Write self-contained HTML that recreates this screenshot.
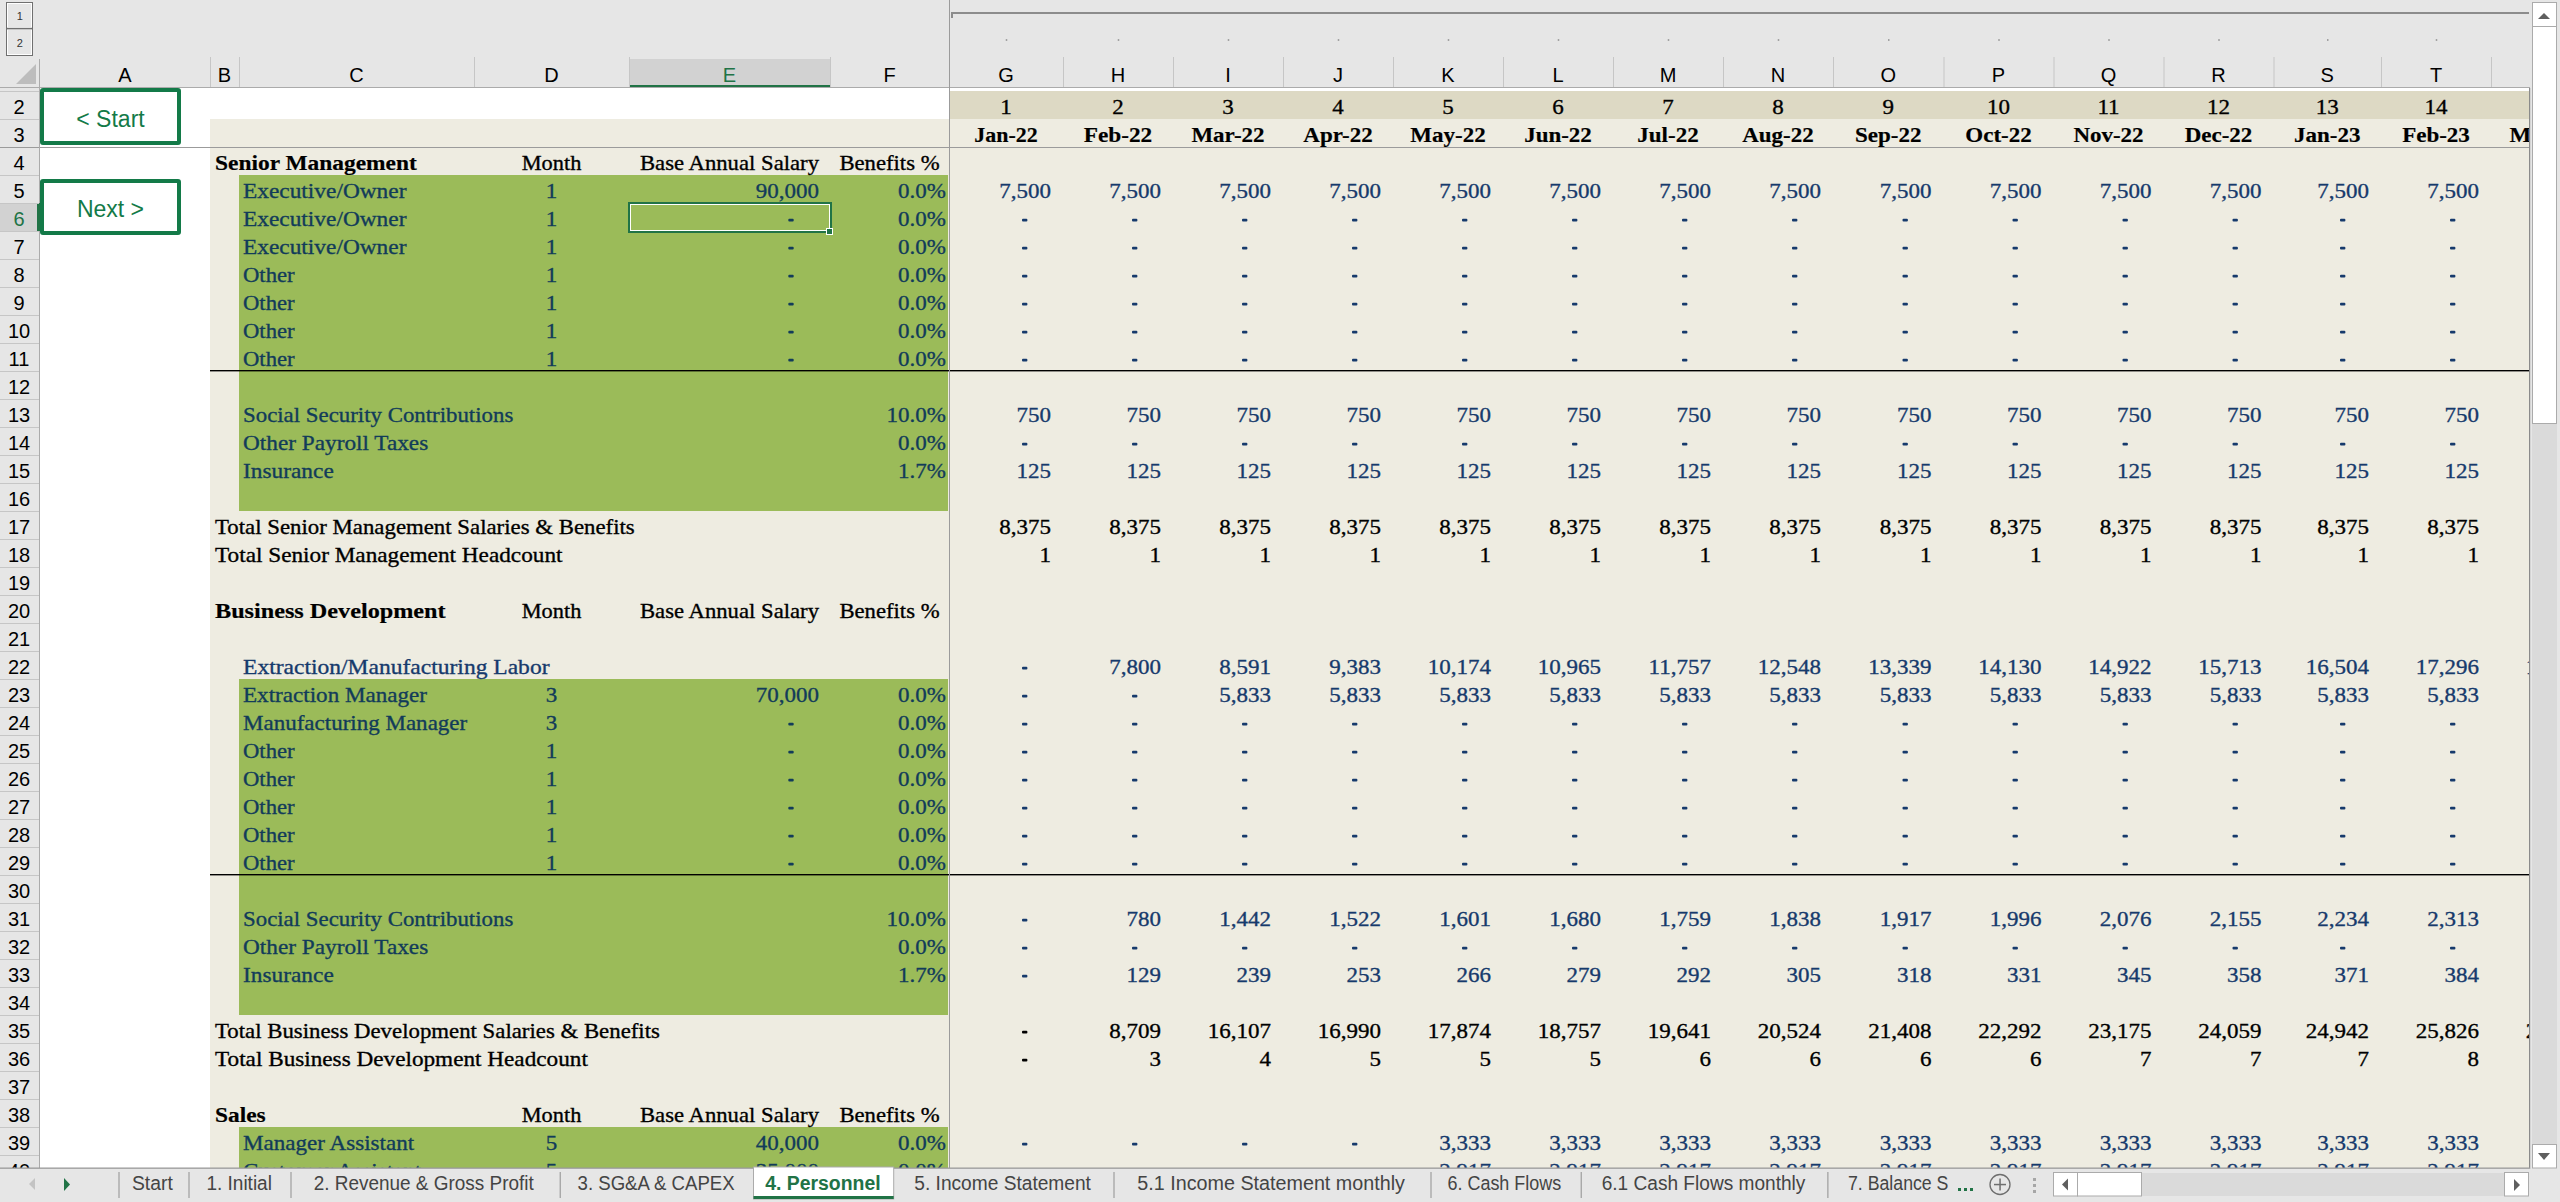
<!DOCTYPE html><html><head><meta charset="utf-8"><title>4. Personnel</title><style>
html,body{margin:0;padding:0;width:2560px;height:1202px;overflow:hidden;background:#E6E6E6}
svg{display:block}
.s{font-family:"Liberation Serif",serif;font-size:22px;stroke-width:0.35px}
.sb{font-family:"Liberation Serif",serif;font-size:22px;font-weight:bold;stroke-width:0.2px}
.hd{font-family:"Liberation Sans",sans-serif;font-size:20px}
.ol{font-family:"Liberation Sans",sans-serif;font-size:11px;fill:#333}
.btn{font-family:"Liberation Sans",sans-serif;font-size:23px}
.tab{font-family:"Liberation Sans",sans-serif;font-size:20px}
.tabb{font-family:"Liberation Sans",sans-serif;font-size:20px;font-weight:bold}
</style></head><body><svg width="2560" height="1202" viewBox="0 0 2560 1202"><defs><clipPath id="grid"><rect x="40" y="88" width="2489" height="1080"/></clipPath></defs><g clip-path="url(#grid)"><rect x="0" y="0" width="2560" height="1202" fill="#E6E6E6" /><rect x="40" y="88" width="2490" height="1080" fill="#FFFFFF" /><rect x="210" y="119" width="739" height="1049" fill="#EEECE1" /><rect x="949" y="91" width="1581" height="28" fill="#DDD9C4" /><rect x="949" y="119" width="1581" height="1049" fill="#EEECE1" /><rect x="239" y="175" width="709" height="336" fill="#9BBB59" /><rect x="239" y="679" width="709" height="336" fill="#9BBB59" /><rect x="239" y="1127" width="709" height="41" fill="#9BBB59" /><rect x="210" y="370" width="2320" height="1.4" fill="#000" /><rect x="210" y="874" width="2320" height="1.4" fill="#000" /><text x="1006.0" y="114" text-anchor="middle" class="s" fill="#000" stroke="#000" textLength="11.49" lengthAdjust="spacingAndGlyphs" >1</text><text x="1006.0" y="142" text-anchor="middle" class="sb" fill="#000" stroke="#000" textLength="63.31" lengthAdjust="spacingAndGlyphs" >Jan-22</text><text x="1118.0" y="114" text-anchor="middle" class="s" fill="#000" stroke="#000" textLength="11.49" lengthAdjust="spacingAndGlyphs" >2</text><text x="1118.0" y="142" text-anchor="middle" class="sb" fill="#000" stroke="#000" textLength="68.52" lengthAdjust="spacingAndGlyphs" >Feb-22</text><text x="1228.0" y="114" text-anchor="middle" class="s" fill="#000" stroke="#000" textLength="11.49" lengthAdjust="spacingAndGlyphs" >3</text><text x="1228.0" y="142" text-anchor="middle" class="sb" fill="#000" stroke="#000" textLength="73.20" lengthAdjust="spacingAndGlyphs" >Mar-22</text><text x="1338.0" y="114" text-anchor="middle" class="s" fill="#000" stroke="#000" textLength="11.49" lengthAdjust="spacingAndGlyphs" >4</text><text x="1338.0" y="142" text-anchor="middle" class="sb" fill="#000" stroke="#000" textLength="69.39" lengthAdjust="spacingAndGlyphs" >Apr-22</text><text x="1448.0" y="114" text-anchor="middle" class="s" fill="#000" stroke="#000" textLength="11.49" lengthAdjust="spacingAndGlyphs" >5</text><text x="1448.0" y="142" text-anchor="middle" class="sb" fill="#000" stroke="#000" textLength="75.34" lengthAdjust="spacingAndGlyphs" >May-22</text><text x="1558.0" y="114" text-anchor="middle" class="s" fill="#000" stroke="#000" textLength="11.49" lengthAdjust="spacingAndGlyphs" >6</text><text x="1558.0" y="142" text-anchor="middle" class="sb" fill="#000" stroke="#000" textLength="67.71" lengthAdjust="spacingAndGlyphs" >Jun-22</text><text x="1668.0" y="114" text-anchor="middle" class="s" fill="#000" stroke="#000" textLength="11.49" lengthAdjust="spacingAndGlyphs" >7</text><text x="1668.0" y="142" text-anchor="middle" class="sb" fill="#000" stroke="#000" textLength="61.31" lengthAdjust="spacingAndGlyphs" >Jul-22</text><text x="1778.0" y="114" text-anchor="middle" class="s" fill="#000" stroke="#000" textLength="11.49" lengthAdjust="spacingAndGlyphs" >8</text><text x="1778.0" y="142" text-anchor="middle" class="sb" fill="#000" stroke="#000" textLength="71.53" lengthAdjust="spacingAndGlyphs" >Aug-22</text><text x="1888.25" y="114" text-anchor="middle" class="s" fill="#000" stroke="#000" textLength="11.49" lengthAdjust="spacingAndGlyphs" >9</text><text x="1888.25" y="142" text-anchor="middle" class="sb" fill="#000" stroke="#000" textLength="66.42" lengthAdjust="spacingAndGlyphs" >Sep-22</text><text x="1998.5" y="114" text-anchor="middle" class="s" fill="#000" stroke="#000" textLength="22.99" lengthAdjust="spacingAndGlyphs" >10</text><text x="1998.5" y="142" text-anchor="middle" class="sb" fill="#000" stroke="#000" textLength="66.39" lengthAdjust="spacingAndGlyphs" >Oct-22</text><text x="2108.5" y="114" text-anchor="middle" class="s" fill="#000" stroke="#000" textLength="22.14" lengthAdjust="spacingAndGlyphs" >11</text><text x="2108.5" y="142" text-anchor="middle" class="sb" fill="#000" stroke="#000" textLength="70.24" lengthAdjust="spacingAndGlyphs" >Nov-22</text><text x="2218.5" y="114" text-anchor="middle" class="s" fill="#000" stroke="#000" textLength="22.99" lengthAdjust="spacingAndGlyphs" >12</text><text x="2218.5" y="142" text-anchor="middle" class="sb" fill="#000" stroke="#000" textLength="67.66" lengthAdjust="spacingAndGlyphs" >Dec-22</text><text x="2327.25" y="114" text-anchor="middle" class="s" fill="#000" stroke="#000" textLength="22.99" lengthAdjust="spacingAndGlyphs" >13</text><text x="2327.25" y="142" text-anchor="middle" class="sb" fill="#000" stroke="#000" textLength="66.42" lengthAdjust="spacingAndGlyphs" >Jan-23</text><text x="2436.0" y="114" text-anchor="middle" class="s" fill="#000" stroke="#000" textLength="22.99" lengthAdjust="spacingAndGlyphs" >14</text><text x="2436.0" y="142" text-anchor="middle" class="sb" fill="#000" stroke="#000" textLength="67.68" lengthAdjust="spacingAndGlyphs" >Feb-23</text><text x="2546.0" y="114" text-anchor="middle" class="s" fill="#000" stroke="#000" textLength="22.99" lengthAdjust="spacingAndGlyphs" >15</text><text x="2546.0" y="142" text-anchor="middle" class="sb" fill="#000" stroke="#000" textLength="73.20" lengthAdjust="spacingAndGlyphs" >Mar-23</text><text x="215" y="170" text-anchor="start" class="sb" fill="#000" stroke="#000" textLength="201.84" lengthAdjust="spacingAndGlyphs" >Senior Management</text><text x="551.5" y="170" text-anchor="middle" class="s" fill="#000" stroke="#000" textLength="59.67" lengthAdjust="spacingAndGlyphs" >Month</text><text x="729.5" y="170" text-anchor="middle" class="s" fill="#000" stroke="#000" textLength="179.02" lengthAdjust="spacingAndGlyphs" >Base Annual Salary</text><text x="889.5" y="170" text-anchor="middle" class="s" fill="#000" stroke="#000" textLength="100.14" lengthAdjust="spacingAndGlyphs" >Benefits %</text><text x="243" y="198" text-anchor="start" class="s" fill="#123B5A" stroke="#123B5A" textLength="163.44" lengthAdjust="spacingAndGlyphs" >Executive/Owner</text><text x="551.5" y="198" text-anchor="middle" class="s" fill="#123B5A" stroke="#123B5A" textLength="11.49" lengthAdjust="spacingAndGlyphs" >1</text><text x="819" y="198" text-anchor="end" class="s" fill="#123B5A" stroke="#123B5A" textLength="63.22" lengthAdjust="spacingAndGlyphs" >90,000</text><text x="946" y="198" text-anchor="end" class="s" fill="#123B5A" stroke="#123B5A" textLength="47.89" lengthAdjust="spacingAndGlyphs" >0.0%</text><text x="1051" y="198" text-anchor="end" class="s" fill="#163A6C" stroke="#163A6C" textLength="51.73" lengthAdjust="spacingAndGlyphs" >7,500</text><text x="1161" y="198" text-anchor="end" class="s" fill="#163A6C" stroke="#163A6C" textLength="51.73" lengthAdjust="spacingAndGlyphs" >7,500</text><text x="1271" y="198" text-anchor="end" class="s" fill="#163A6C" stroke="#163A6C" textLength="51.73" lengthAdjust="spacingAndGlyphs" >7,500</text><text x="1381" y="198" text-anchor="end" class="s" fill="#163A6C" stroke="#163A6C" textLength="51.73" lengthAdjust="spacingAndGlyphs" >7,500</text><text x="1491" y="198" text-anchor="end" class="s" fill="#163A6C" stroke="#163A6C" textLength="51.73" lengthAdjust="spacingAndGlyphs" >7,500</text><text x="1601" y="198" text-anchor="end" class="s" fill="#163A6C" stroke="#163A6C" textLength="51.73" lengthAdjust="spacingAndGlyphs" >7,500</text><text x="1711" y="198" text-anchor="end" class="s" fill="#163A6C" stroke="#163A6C" textLength="51.73" lengthAdjust="spacingAndGlyphs" >7,500</text><text x="1821" y="198" text-anchor="end" class="s" fill="#163A6C" stroke="#163A6C" textLength="51.73" lengthAdjust="spacingAndGlyphs" >7,500</text><text x="1931.5" y="198" text-anchor="end" class="s" fill="#163A6C" stroke="#163A6C" textLength="51.73" lengthAdjust="spacingAndGlyphs" >7,500</text><text x="2041.5" y="198" text-anchor="end" class="s" fill="#163A6C" stroke="#163A6C" textLength="51.73" lengthAdjust="spacingAndGlyphs" >7,500</text><text x="2151.5" y="198" text-anchor="end" class="s" fill="#163A6C" stroke="#163A6C" textLength="51.73" lengthAdjust="spacingAndGlyphs" >7,500</text><text x="2261.5" y="198" text-anchor="end" class="s" fill="#163A6C" stroke="#163A6C" textLength="51.73" lengthAdjust="spacingAndGlyphs" >7,500</text><text x="2369" y="198" text-anchor="end" class="s" fill="#163A6C" stroke="#163A6C" textLength="51.73" lengthAdjust="spacingAndGlyphs" >7,500</text><text x="2479" y="198" text-anchor="end" class="s" fill="#163A6C" stroke="#163A6C" textLength="51.73" lengthAdjust="spacingAndGlyphs" >7,500</text><text x="243" y="226" text-anchor="start" class="s" fill="#123B5A" stroke="#123B5A" textLength="163.44" lengthAdjust="spacingAndGlyphs" >Executive/Owner</text><text x="551.5" y="226" text-anchor="middle" class="s" fill="#123B5A" stroke="#123B5A" textLength="11.49" lengthAdjust="spacingAndGlyphs" >1</text><rect x="788.3" y="218.8" width="5.4" height="2.6" fill="#123B5A" rx="1"/><text x="946" y="226" text-anchor="end" class="s" fill="#123B5A" stroke="#123B5A" textLength="47.89" lengthAdjust="spacingAndGlyphs" >0.0%</text><rect x="1022" y="218.8" width="5.4" height="2.6" fill="#163A6C" rx="1"/><rect x="1132" y="218.8" width="5.4" height="2.6" fill="#163A6C" rx="1"/><rect x="1242" y="218.8" width="5.4" height="2.6" fill="#163A6C" rx="1"/><rect x="1352" y="218.8" width="5.4" height="2.6" fill="#163A6C" rx="1"/><rect x="1462" y="218.8" width="5.4" height="2.6" fill="#163A6C" rx="1"/><rect x="1572" y="218.8" width="5.4" height="2.6" fill="#163A6C" rx="1"/><rect x="1682" y="218.8" width="5.4" height="2.6" fill="#163A6C" rx="1"/><rect x="1792" y="218.8" width="5.4" height="2.6" fill="#163A6C" rx="1"/><rect x="1902.5" y="218.8" width="5.4" height="2.6" fill="#163A6C" rx="1"/><rect x="2012.5" y="218.8" width="5.4" height="2.6" fill="#163A6C" rx="1"/><rect x="2122.5" y="218.8" width="5.4" height="2.6" fill="#163A6C" rx="1"/><rect x="2232.5" y="218.8" width="5.4" height="2.6" fill="#163A6C" rx="1"/><rect x="2340" y="218.8" width="5.4" height="2.6" fill="#163A6C" rx="1"/><rect x="2450" y="218.8" width="5.4" height="2.6" fill="#163A6C" rx="1"/><text x="243" y="254" text-anchor="start" class="s" fill="#123B5A" stroke="#123B5A" textLength="163.44" lengthAdjust="spacingAndGlyphs" >Executive/Owner</text><text x="551.5" y="254" text-anchor="middle" class="s" fill="#123B5A" stroke="#123B5A" textLength="11.49" lengthAdjust="spacingAndGlyphs" >1</text><rect x="788.3" y="246.8" width="5.4" height="2.6" fill="#123B5A" rx="1"/><text x="946" y="254" text-anchor="end" class="s" fill="#123B5A" stroke="#123B5A" textLength="47.89" lengthAdjust="spacingAndGlyphs" >0.0%</text><rect x="1022" y="246.8" width="5.4" height="2.6" fill="#163A6C" rx="1"/><rect x="1132" y="246.8" width="5.4" height="2.6" fill="#163A6C" rx="1"/><rect x="1242" y="246.8" width="5.4" height="2.6" fill="#163A6C" rx="1"/><rect x="1352" y="246.8" width="5.4" height="2.6" fill="#163A6C" rx="1"/><rect x="1462" y="246.8" width="5.4" height="2.6" fill="#163A6C" rx="1"/><rect x="1572" y="246.8" width="5.4" height="2.6" fill="#163A6C" rx="1"/><rect x="1682" y="246.8" width="5.4" height="2.6" fill="#163A6C" rx="1"/><rect x="1792" y="246.8" width="5.4" height="2.6" fill="#163A6C" rx="1"/><rect x="1902.5" y="246.8" width="5.4" height="2.6" fill="#163A6C" rx="1"/><rect x="2012.5" y="246.8" width="5.4" height="2.6" fill="#163A6C" rx="1"/><rect x="2122.5" y="246.8" width="5.4" height="2.6" fill="#163A6C" rx="1"/><rect x="2232.5" y="246.8" width="5.4" height="2.6" fill="#163A6C" rx="1"/><rect x="2340" y="246.8" width="5.4" height="2.6" fill="#163A6C" rx="1"/><rect x="2450" y="246.8" width="5.4" height="2.6" fill="#163A6C" rx="1"/><text x="243" y="282" text-anchor="start" class="s" fill="#123B5A" stroke="#123B5A" textLength="51.59" lengthAdjust="spacingAndGlyphs" >Other</text><text x="551.5" y="282" text-anchor="middle" class="s" fill="#123B5A" stroke="#123B5A" textLength="11.49" lengthAdjust="spacingAndGlyphs" >1</text><rect x="788.3" y="274.8" width="5.4" height="2.6" fill="#123B5A" rx="1"/><text x="946" y="282" text-anchor="end" class="s" fill="#123B5A" stroke="#123B5A" textLength="47.89" lengthAdjust="spacingAndGlyphs" >0.0%</text><rect x="1022" y="274.8" width="5.4" height="2.6" fill="#163A6C" rx="1"/><rect x="1132" y="274.8" width="5.4" height="2.6" fill="#163A6C" rx="1"/><rect x="1242" y="274.8" width="5.4" height="2.6" fill="#163A6C" rx="1"/><rect x="1352" y="274.8" width="5.4" height="2.6" fill="#163A6C" rx="1"/><rect x="1462" y="274.8" width="5.4" height="2.6" fill="#163A6C" rx="1"/><rect x="1572" y="274.8" width="5.4" height="2.6" fill="#163A6C" rx="1"/><rect x="1682" y="274.8" width="5.4" height="2.6" fill="#163A6C" rx="1"/><rect x="1792" y="274.8" width="5.4" height="2.6" fill="#163A6C" rx="1"/><rect x="1902.5" y="274.8" width="5.4" height="2.6" fill="#163A6C" rx="1"/><rect x="2012.5" y="274.8" width="5.4" height="2.6" fill="#163A6C" rx="1"/><rect x="2122.5" y="274.8" width="5.4" height="2.6" fill="#163A6C" rx="1"/><rect x="2232.5" y="274.8" width="5.4" height="2.6" fill="#163A6C" rx="1"/><rect x="2340" y="274.8" width="5.4" height="2.6" fill="#163A6C" rx="1"/><rect x="2450" y="274.8" width="5.4" height="2.6" fill="#163A6C" rx="1"/><text x="243" y="310" text-anchor="start" class="s" fill="#123B5A" stroke="#123B5A" textLength="51.59" lengthAdjust="spacingAndGlyphs" >Other</text><text x="551.5" y="310" text-anchor="middle" class="s" fill="#123B5A" stroke="#123B5A" textLength="11.49" lengthAdjust="spacingAndGlyphs" >1</text><rect x="788.3" y="302.8" width="5.4" height="2.6" fill="#123B5A" rx="1"/><text x="946" y="310" text-anchor="end" class="s" fill="#123B5A" stroke="#123B5A" textLength="47.89" lengthAdjust="spacingAndGlyphs" >0.0%</text><rect x="1022" y="302.8" width="5.4" height="2.6" fill="#163A6C" rx="1"/><rect x="1132" y="302.8" width="5.4" height="2.6" fill="#163A6C" rx="1"/><rect x="1242" y="302.8" width="5.4" height="2.6" fill="#163A6C" rx="1"/><rect x="1352" y="302.8" width="5.4" height="2.6" fill="#163A6C" rx="1"/><rect x="1462" y="302.8" width="5.4" height="2.6" fill="#163A6C" rx="1"/><rect x="1572" y="302.8" width="5.4" height="2.6" fill="#163A6C" rx="1"/><rect x="1682" y="302.8" width="5.4" height="2.6" fill="#163A6C" rx="1"/><rect x="1792" y="302.8" width="5.4" height="2.6" fill="#163A6C" rx="1"/><rect x="1902.5" y="302.8" width="5.4" height="2.6" fill="#163A6C" rx="1"/><rect x="2012.5" y="302.8" width="5.4" height="2.6" fill="#163A6C" rx="1"/><rect x="2122.5" y="302.8" width="5.4" height="2.6" fill="#163A6C" rx="1"/><rect x="2232.5" y="302.8" width="5.4" height="2.6" fill="#163A6C" rx="1"/><rect x="2340" y="302.8" width="5.4" height="2.6" fill="#163A6C" rx="1"/><rect x="2450" y="302.8" width="5.4" height="2.6" fill="#163A6C" rx="1"/><text x="243" y="338" text-anchor="start" class="s" fill="#123B5A" stroke="#123B5A" textLength="51.59" lengthAdjust="spacingAndGlyphs" >Other</text><text x="551.5" y="338" text-anchor="middle" class="s" fill="#123B5A" stroke="#123B5A" textLength="11.49" lengthAdjust="spacingAndGlyphs" >1</text><rect x="788.3" y="330.8" width="5.4" height="2.6" fill="#123B5A" rx="1"/><text x="946" y="338" text-anchor="end" class="s" fill="#123B5A" stroke="#123B5A" textLength="47.89" lengthAdjust="spacingAndGlyphs" >0.0%</text><rect x="1022" y="330.8" width="5.4" height="2.6" fill="#163A6C" rx="1"/><rect x="1132" y="330.8" width="5.4" height="2.6" fill="#163A6C" rx="1"/><rect x="1242" y="330.8" width="5.4" height="2.6" fill="#163A6C" rx="1"/><rect x="1352" y="330.8" width="5.4" height="2.6" fill="#163A6C" rx="1"/><rect x="1462" y="330.8" width="5.4" height="2.6" fill="#163A6C" rx="1"/><rect x="1572" y="330.8" width="5.4" height="2.6" fill="#163A6C" rx="1"/><rect x="1682" y="330.8" width="5.4" height="2.6" fill="#163A6C" rx="1"/><rect x="1792" y="330.8" width="5.4" height="2.6" fill="#163A6C" rx="1"/><rect x="1902.5" y="330.8" width="5.4" height="2.6" fill="#163A6C" rx="1"/><rect x="2012.5" y="330.8" width="5.4" height="2.6" fill="#163A6C" rx="1"/><rect x="2122.5" y="330.8" width="5.4" height="2.6" fill="#163A6C" rx="1"/><rect x="2232.5" y="330.8" width="5.4" height="2.6" fill="#163A6C" rx="1"/><rect x="2340" y="330.8" width="5.4" height="2.6" fill="#163A6C" rx="1"/><rect x="2450" y="330.8" width="5.4" height="2.6" fill="#163A6C" rx="1"/><text x="243" y="366" text-anchor="start" class="s" fill="#123B5A" stroke="#123B5A" textLength="51.59" lengthAdjust="spacingAndGlyphs" >Other</text><text x="551.5" y="366" text-anchor="middle" class="s" fill="#123B5A" stroke="#123B5A" textLength="11.49" lengthAdjust="spacingAndGlyphs" >1</text><rect x="788.3" y="358.8" width="5.4" height="2.6" fill="#123B5A" rx="1"/><text x="946" y="366" text-anchor="end" class="s" fill="#123B5A" stroke="#123B5A" textLength="47.89" lengthAdjust="spacingAndGlyphs" >0.0%</text><rect x="1022" y="358.8" width="5.4" height="2.6" fill="#163A6C" rx="1"/><rect x="1132" y="358.8" width="5.4" height="2.6" fill="#163A6C" rx="1"/><rect x="1242" y="358.8" width="5.4" height="2.6" fill="#163A6C" rx="1"/><rect x="1352" y="358.8" width="5.4" height="2.6" fill="#163A6C" rx="1"/><rect x="1462" y="358.8" width="5.4" height="2.6" fill="#163A6C" rx="1"/><rect x="1572" y="358.8" width="5.4" height="2.6" fill="#163A6C" rx="1"/><rect x="1682" y="358.8" width="5.4" height="2.6" fill="#163A6C" rx="1"/><rect x="1792" y="358.8" width="5.4" height="2.6" fill="#163A6C" rx="1"/><rect x="1902.5" y="358.8" width="5.4" height="2.6" fill="#163A6C" rx="1"/><rect x="2012.5" y="358.8" width="5.4" height="2.6" fill="#163A6C" rx="1"/><rect x="2122.5" y="358.8" width="5.4" height="2.6" fill="#163A6C" rx="1"/><rect x="2232.5" y="358.8" width="5.4" height="2.6" fill="#163A6C" rx="1"/><rect x="2340" y="358.8" width="5.4" height="2.6" fill="#163A6C" rx="1"/><rect x="2450" y="358.8" width="5.4" height="2.6" fill="#163A6C" rx="1"/><text x="243" y="422" text-anchor="start" class="s" fill="#123B5A" stroke="#123B5A" textLength="270.30" lengthAdjust="spacingAndGlyphs" >Social Security Contributions</text><text x="946" y="422" text-anchor="end" class="s" fill="#123B5A" stroke="#123B5A" textLength="59.39" lengthAdjust="spacingAndGlyphs" >10.0%</text><text x="1051" y="422" text-anchor="end" class="s" fill="#163A6C" stroke="#163A6C" textLength="34.48" lengthAdjust="spacingAndGlyphs" >750</text><text x="1161" y="422" text-anchor="end" class="s" fill="#163A6C" stroke="#163A6C" textLength="34.48" lengthAdjust="spacingAndGlyphs" >750</text><text x="1271" y="422" text-anchor="end" class="s" fill="#163A6C" stroke="#163A6C" textLength="34.48" lengthAdjust="spacingAndGlyphs" >750</text><text x="1381" y="422" text-anchor="end" class="s" fill="#163A6C" stroke="#163A6C" textLength="34.48" lengthAdjust="spacingAndGlyphs" >750</text><text x="1491" y="422" text-anchor="end" class="s" fill="#163A6C" stroke="#163A6C" textLength="34.48" lengthAdjust="spacingAndGlyphs" >750</text><text x="1601" y="422" text-anchor="end" class="s" fill="#163A6C" stroke="#163A6C" textLength="34.48" lengthAdjust="spacingAndGlyphs" >750</text><text x="1711" y="422" text-anchor="end" class="s" fill="#163A6C" stroke="#163A6C" textLength="34.48" lengthAdjust="spacingAndGlyphs" >750</text><text x="1821" y="422" text-anchor="end" class="s" fill="#163A6C" stroke="#163A6C" textLength="34.48" lengthAdjust="spacingAndGlyphs" >750</text><text x="1931.5" y="422" text-anchor="end" class="s" fill="#163A6C" stroke="#163A6C" textLength="34.48" lengthAdjust="spacingAndGlyphs" >750</text><text x="2041.5" y="422" text-anchor="end" class="s" fill="#163A6C" stroke="#163A6C" textLength="34.48" lengthAdjust="spacingAndGlyphs" >750</text><text x="2151.5" y="422" text-anchor="end" class="s" fill="#163A6C" stroke="#163A6C" textLength="34.48" lengthAdjust="spacingAndGlyphs" >750</text><text x="2261.5" y="422" text-anchor="end" class="s" fill="#163A6C" stroke="#163A6C" textLength="34.48" lengthAdjust="spacingAndGlyphs" >750</text><text x="2369" y="422" text-anchor="end" class="s" fill="#163A6C" stroke="#163A6C" textLength="34.48" lengthAdjust="spacingAndGlyphs" >750</text><text x="2479" y="422" text-anchor="end" class="s" fill="#163A6C" stroke="#163A6C" textLength="34.48" lengthAdjust="spacingAndGlyphs" >750</text><text x="243" y="450" text-anchor="start" class="s" fill="#123B5A" stroke="#123B5A" textLength="185.25" lengthAdjust="spacingAndGlyphs" >Other Payroll Taxes</text><text x="946" y="450" text-anchor="end" class="s" fill="#123B5A" stroke="#123B5A" textLength="47.89" lengthAdjust="spacingAndGlyphs" >0.0%</text><rect x="1022" y="442.8" width="5.4" height="2.6" fill="#163A6C" rx="1"/><rect x="1132" y="442.8" width="5.4" height="2.6" fill="#163A6C" rx="1"/><rect x="1242" y="442.8" width="5.4" height="2.6" fill="#163A6C" rx="1"/><rect x="1352" y="442.8" width="5.4" height="2.6" fill="#163A6C" rx="1"/><rect x="1462" y="442.8" width="5.4" height="2.6" fill="#163A6C" rx="1"/><rect x="1572" y="442.8" width="5.4" height="2.6" fill="#163A6C" rx="1"/><rect x="1682" y="442.8" width="5.4" height="2.6" fill="#163A6C" rx="1"/><rect x="1792" y="442.8" width="5.4" height="2.6" fill="#163A6C" rx="1"/><rect x="1902.5" y="442.8" width="5.4" height="2.6" fill="#163A6C" rx="1"/><rect x="2012.5" y="442.8" width="5.4" height="2.6" fill="#163A6C" rx="1"/><rect x="2122.5" y="442.8" width="5.4" height="2.6" fill="#163A6C" rx="1"/><rect x="2232.5" y="442.8" width="5.4" height="2.6" fill="#163A6C" rx="1"/><rect x="2340" y="442.8" width="5.4" height="2.6" fill="#163A6C" rx="1"/><rect x="2450" y="442.8" width="5.4" height="2.6" fill="#163A6C" rx="1"/><text x="243" y="478" text-anchor="start" class="s" fill="#123B5A" stroke="#123B5A" textLength="90.77" lengthAdjust="spacingAndGlyphs" >Insurance</text><text x="946" y="478" text-anchor="end" class="s" fill="#123B5A" stroke="#123B5A" textLength="47.89" lengthAdjust="spacingAndGlyphs" >1.7%</text><text x="1051" y="478" text-anchor="end" class="s" fill="#163A6C" stroke="#163A6C" textLength="34.48" lengthAdjust="spacingAndGlyphs" >125</text><text x="1161" y="478" text-anchor="end" class="s" fill="#163A6C" stroke="#163A6C" textLength="34.48" lengthAdjust="spacingAndGlyphs" >125</text><text x="1271" y="478" text-anchor="end" class="s" fill="#163A6C" stroke="#163A6C" textLength="34.48" lengthAdjust="spacingAndGlyphs" >125</text><text x="1381" y="478" text-anchor="end" class="s" fill="#163A6C" stroke="#163A6C" textLength="34.48" lengthAdjust="spacingAndGlyphs" >125</text><text x="1491" y="478" text-anchor="end" class="s" fill="#163A6C" stroke="#163A6C" textLength="34.48" lengthAdjust="spacingAndGlyphs" >125</text><text x="1601" y="478" text-anchor="end" class="s" fill="#163A6C" stroke="#163A6C" textLength="34.48" lengthAdjust="spacingAndGlyphs" >125</text><text x="1711" y="478" text-anchor="end" class="s" fill="#163A6C" stroke="#163A6C" textLength="34.48" lengthAdjust="spacingAndGlyphs" >125</text><text x="1821" y="478" text-anchor="end" class="s" fill="#163A6C" stroke="#163A6C" textLength="34.48" lengthAdjust="spacingAndGlyphs" >125</text><text x="1931.5" y="478" text-anchor="end" class="s" fill="#163A6C" stroke="#163A6C" textLength="34.48" lengthAdjust="spacingAndGlyphs" >125</text><text x="2041.5" y="478" text-anchor="end" class="s" fill="#163A6C" stroke="#163A6C" textLength="34.48" lengthAdjust="spacingAndGlyphs" >125</text><text x="2151.5" y="478" text-anchor="end" class="s" fill="#163A6C" stroke="#163A6C" textLength="34.48" lengthAdjust="spacingAndGlyphs" >125</text><text x="2261.5" y="478" text-anchor="end" class="s" fill="#163A6C" stroke="#163A6C" textLength="34.48" lengthAdjust="spacingAndGlyphs" >125</text><text x="2369" y="478" text-anchor="end" class="s" fill="#163A6C" stroke="#163A6C" textLength="34.48" lengthAdjust="spacingAndGlyphs" >125</text><text x="2479" y="478" text-anchor="end" class="s" fill="#163A6C" stroke="#163A6C" textLength="34.48" lengthAdjust="spacingAndGlyphs" >125</text><text x="215" y="534" text-anchor="start" class="s" fill="#000" stroke="#000" textLength="419.73" lengthAdjust="spacingAndGlyphs" >Total Senior Management Salaries &amp; Benefits</text><text x="1051" y="534" text-anchor="end" class="s" fill="#000" stroke="#000" textLength="51.73" lengthAdjust="spacingAndGlyphs" >8,375</text><text x="1161" y="534" text-anchor="end" class="s" fill="#000" stroke="#000" textLength="51.73" lengthAdjust="spacingAndGlyphs" >8,375</text><text x="1271" y="534" text-anchor="end" class="s" fill="#000" stroke="#000" textLength="51.73" lengthAdjust="spacingAndGlyphs" >8,375</text><text x="1381" y="534" text-anchor="end" class="s" fill="#000" stroke="#000" textLength="51.73" lengthAdjust="spacingAndGlyphs" >8,375</text><text x="1491" y="534" text-anchor="end" class="s" fill="#000" stroke="#000" textLength="51.73" lengthAdjust="spacingAndGlyphs" >8,375</text><text x="1601" y="534" text-anchor="end" class="s" fill="#000" stroke="#000" textLength="51.73" lengthAdjust="spacingAndGlyphs" >8,375</text><text x="1711" y="534" text-anchor="end" class="s" fill="#000" stroke="#000" textLength="51.73" lengthAdjust="spacingAndGlyphs" >8,375</text><text x="1821" y="534" text-anchor="end" class="s" fill="#000" stroke="#000" textLength="51.73" lengthAdjust="spacingAndGlyphs" >8,375</text><text x="1931.5" y="534" text-anchor="end" class="s" fill="#000" stroke="#000" textLength="51.73" lengthAdjust="spacingAndGlyphs" >8,375</text><text x="2041.5" y="534" text-anchor="end" class="s" fill="#000" stroke="#000" textLength="51.73" lengthAdjust="spacingAndGlyphs" >8,375</text><text x="2151.5" y="534" text-anchor="end" class="s" fill="#000" stroke="#000" textLength="51.73" lengthAdjust="spacingAndGlyphs" >8,375</text><text x="2261.5" y="534" text-anchor="end" class="s" fill="#000" stroke="#000" textLength="51.73" lengthAdjust="spacingAndGlyphs" >8,375</text><text x="2369" y="534" text-anchor="end" class="s" fill="#000" stroke="#000" textLength="51.73" lengthAdjust="spacingAndGlyphs" >8,375</text><text x="2479" y="534" text-anchor="end" class="s" fill="#000" stroke="#000" textLength="51.73" lengthAdjust="spacingAndGlyphs" >8,375</text><text x="215" y="562" text-anchor="start" class="s" fill="#000" stroke="#000" textLength="347.47" lengthAdjust="spacingAndGlyphs" >Total Senior Management Headcount</text><text x="1051" y="562" text-anchor="end" class="s" fill="#000" stroke="#000" textLength="11.49" lengthAdjust="spacingAndGlyphs" >1</text><text x="1161" y="562" text-anchor="end" class="s" fill="#000" stroke="#000" textLength="11.49" lengthAdjust="spacingAndGlyphs" >1</text><text x="1271" y="562" text-anchor="end" class="s" fill="#000" stroke="#000" textLength="11.49" lengthAdjust="spacingAndGlyphs" >1</text><text x="1381" y="562" text-anchor="end" class="s" fill="#000" stroke="#000" textLength="11.49" lengthAdjust="spacingAndGlyphs" >1</text><text x="1491" y="562" text-anchor="end" class="s" fill="#000" stroke="#000" textLength="11.49" lengthAdjust="spacingAndGlyphs" >1</text><text x="1601" y="562" text-anchor="end" class="s" fill="#000" stroke="#000" textLength="11.49" lengthAdjust="spacingAndGlyphs" >1</text><text x="1711" y="562" text-anchor="end" class="s" fill="#000" stroke="#000" textLength="11.49" lengthAdjust="spacingAndGlyphs" >1</text><text x="1821" y="562" text-anchor="end" class="s" fill="#000" stroke="#000" textLength="11.49" lengthAdjust="spacingAndGlyphs" >1</text><text x="1931.5" y="562" text-anchor="end" class="s" fill="#000" stroke="#000" textLength="11.49" lengthAdjust="spacingAndGlyphs" >1</text><text x="2041.5" y="562" text-anchor="end" class="s" fill="#000" stroke="#000" textLength="11.49" lengthAdjust="spacingAndGlyphs" >1</text><text x="2151.5" y="562" text-anchor="end" class="s" fill="#000" stroke="#000" textLength="11.49" lengthAdjust="spacingAndGlyphs" >1</text><text x="2261.5" y="562" text-anchor="end" class="s" fill="#000" stroke="#000" textLength="11.49" lengthAdjust="spacingAndGlyphs" >1</text><text x="2369" y="562" text-anchor="end" class="s" fill="#000" stroke="#000" textLength="11.49" lengthAdjust="spacingAndGlyphs" >1</text><text x="2479" y="562" text-anchor="end" class="s" fill="#000" stroke="#000" textLength="11.49" lengthAdjust="spacingAndGlyphs" >1</text><text x="215" y="618" text-anchor="start" class="sb" fill="#000" stroke="#000" textLength="230.62" lengthAdjust="spacingAndGlyphs" >Business Development</text><text x="551.5" y="618" text-anchor="middle" class="s" fill="#000" stroke="#000" textLength="59.67" lengthAdjust="spacingAndGlyphs" >Month</text><text x="729.5" y="618" text-anchor="middle" class="s" fill="#000" stroke="#000" textLength="179.02" lengthAdjust="spacingAndGlyphs" >Base Annual Salary</text><text x="889.5" y="618" text-anchor="middle" class="s" fill="#000" stroke="#000" textLength="100.14" lengthAdjust="spacingAndGlyphs" >Benefits %</text><text x="243" y="674" text-anchor="start" class="s" fill="#163A6C" stroke="#163A6C" textLength="306.50" lengthAdjust="spacingAndGlyphs" >Extraction/Manufacturing Labor</text><rect x="1022" y="666.8" width="5.4" height="2.6" fill="#163A6C" rx="1"/><text x="1161" y="674" text-anchor="end" class="s" fill="#163A6C" stroke="#163A6C" textLength="51.73" lengthAdjust="spacingAndGlyphs" >7,800</text><text x="1271" y="674" text-anchor="end" class="s" fill="#163A6C" stroke="#163A6C" textLength="51.73" lengthAdjust="spacingAndGlyphs" >8,591</text><text x="1381" y="674" text-anchor="end" class="s" fill="#163A6C" stroke="#163A6C" textLength="51.73" lengthAdjust="spacingAndGlyphs" >9,383</text><text x="1491" y="674" text-anchor="end" class="s" fill="#163A6C" stroke="#163A6C" textLength="63.22" lengthAdjust="spacingAndGlyphs" >10,174</text><text x="1601" y="674" text-anchor="end" class="s" fill="#163A6C" stroke="#163A6C" textLength="63.22" lengthAdjust="spacingAndGlyphs" >10,965</text><text x="1711" y="674" text-anchor="end" class="s" fill="#163A6C" stroke="#163A6C" textLength="62.37" lengthAdjust="spacingAndGlyphs" >11,757</text><text x="1821" y="674" text-anchor="end" class="s" fill="#163A6C" stroke="#163A6C" textLength="63.22" lengthAdjust="spacingAndGlyphs" >12,548</text><text x="1931.5" y="674" text-anchor="end" class="s" fill="#163A6C" stroke="#163A6C" textLength="63.22" lengthAdjust="spacingAndGlyphs" >13,339</text><text x="2041.5" y="674" text-anchor="end" class="s" fill="#163A6C" stroke="#163A6C" textLength="63.22" lengthAdjust="spacingAndGlyphs" >14,130</text><text x="2151.5" y="674" text-anchor="end" class="s" fill="#163A6C" stroke="#163A6C" textLength="63.22" lengthAdjust="spacingAndGlyphs" >14,922</text><text x="2261.5" y="674" text-anchor="end" class="s" fill="#163A6C" stroke="#163A6C" textLength="63.22" lengthAdjust="spacingAndGlyphs" >15,713</text><text x="2369" y="674" text-anchor="end" class="s" fill="#163A6C" stroke="#163A6C" textLength="63.22" lengthAdjust="spacingAndGlyphs" >16,504</text><text x="2479" y="674" text-anchor="end" class="s" fill="#163A6C" stroke="#163A6C" textLength="63.22" lengthAdjust="spacingAndGlyphs" >17,296</text><text x="2589" y="674" text-anchor="end" class="s" fill="#163A6C" stroke="#163A6C" textLength="63.22" lengthAdjust="spacingAndGlyphs" >18,087</text><text x="243" y="702" text-anchor="start" class="s" fill="#123B5A" stroke="#123B5A" textLength="184.01" lengthAdjust="spacingAndGlyphs" >Extraction Manager</text><text x="551.5" y="702" text-anchor="middle" class="s" fill="#123B5A" stroke="#123B5A" textLength="11.49" lengthAdjust="spacingAndGlyphs" >3</text><text x="819" y="702" text-anchor="end" class="s" fill="#123B5A" stroke="#123B5A" textLength="63.22" lengthAdjust="spacingAndGlyphs" >70,000</text><text x="946" y="702" text-anchor="end" class="s" fill="#123B5A" stroke="#123B5A" textLength="47.89" lengthAdjust="spacingAndGlyphs" >0.0%</text><rect x="1022" y="694.8" width="5.4" height="2.6" fill="#163A6C" rx="1"/><rect x="1132" y="694.8" width="5.4" height="2.6" fill="#163A6C" rx="1"/><text x="1271" y="702" text-anchor="end" class="s" fill="#163A6C" stroke="#163A6C" textLength="51.73" lengthAdjust="spacingAndGlyphs" >5,833</text><text x="1381" y="702" text-anchor="end" class="s" fill="#163A6C" stroke="#163A6C" textLength="51.73" lengthAdjust="spacingAndGlyphs" >5,833</text><text x="1491" y="702" text-anchor="end" class="s" fill="#163A6C" stroke="#163A6C" textLength="51.73" lengthAdjust="spacingAndGlyphs" >5,833</text><text x="1601" y="702" text-anchor="end" class="s" fill="#163A6C" stroke="#163A6C" textLength="51.73" lengthAdjust="spacingAndGlyphs" >5,833</text><text x="1711" y="702" text-anchor="end" class="s" fill="#163A6C" stroke="#163A6C" textLength="51.73" lengthAdjust="spacingAndGlyphs" >5,833</text><text x="1821" y="702" text-anchor="end" class="s" fill="#163A6C" stroke="#163A6C" textLength="51.73" lengthAdjust="spacingAndGlyphs" >5,833</text><text x="1931.5" y="702" text-anchor="end" class="s" fill="#163A6C" stroke="#163A6C" textLength="51.73" lengthAdjust="spacingAndGlyphs" >5,833</text><text x="2041.5" y="702" text-anchor="end" class="s" fill="#163A6C" stroke="#163A6C" textLength="51.73" lengthAdjust="spacingAndGlyphs" >5,833</text><text x="2151.5" y="702" text-anchor="end" class="s" fill="#163A6C" stroke="#163A6C" textLength="51.73" lengthAdjust="spacingAndGlyphs" >5,833</text><text x="2261.5" y="702" text-anchor="end" class="s" fill="#163A6C" stroke="#163A6C" textLength="51.73" lengthAdjust="spacingAndGlyphs" >5,833</text><text x="2369" y="702" text-anchor="end" class="s" fill="#163A6C" stroke="#163A6C" textLength="51.73" lengthAdjust="spacingAndGlyphs" >5,833</text><text x="2479" y="702" text-anchor="end" class="s" fill="#163A6C" stroke="#163A6C" textLength="51.73" lengthAdjust="spacingAndGlyphs" >5,833</text><text x="243" y="730" text-anchor="start" class="s" fill="#123B5A" stroke="#123B5A" textLength="224.22" lengthAdjust="spacingAndGlyphs" >Manufacturing Manager</text><text x="551.5" y="730" text-anchor="middle" class="s" fill="#123B5A" stroke="#123B5A" textLength="11.49" lengthAdjust="spacingAndGlyphs" >3</text><rect x="788.3" y="722.8" width="5.4" height="2.6" fill="#123B5A" rx="1"/><text x="946" y="730" text-anchor="end" class="s" fill="#123B5A" stroke="#123B5A" textLength="47.89" lengthAdjust="spacingAndGlyphs" >0.0%</text><rect x="1022" y="722.8" width="5.4" height="2.6" fill="#163A6C" rx="1"/><rect x="1132" y="722.8" width="5.4" height="2.6" fill="#163A6C" rx="1"/><rect x="1242" y="722.8" width="5.4" height="2.6" fill="#163A6C" rx="1"/><rect x="1352" y="722.8" width="5.4" height="2.6" fill="#163A6C" rx="1"/><rect x="1462" y="722.8" width="5.4" height="2.6" fill="#163A6C" rx="1"/><rect x="1572" y="722.8" width="5.4" height="2.6" fill="#163A6C" rx="1"/><rect x="1682" y="722.8" width="5.4" height="2.6" fill="#163A6C" rx="1"/><rect x="1792" y="722.8" width="5.4" height="2.6" fill="#163A6C" rx="1"/><rect x="1902.5" y="722.8" width="5.4" height="2.6" fill="#163A6C" rx="1"/><rect x="2012.5" y="722.8" width="5.4" height="2.6" fill="#163A6C" rx="1"/><rect x="2122.5" y="722.8" width="5.4" height="2.6" fill="#163A6C" rx="1"/><rect x="2232.5" y="722.8" width="5.4" height="2.6" fill="#163A6C" rx="1"/><rect x="2340" y="722.8" width="5.4" height="2.6" fill="#163A6C" rx="1"/><rect x="2450" y="722.8" width="5.4" height="2.6" fill="#163A6C" rx="1"/><text x="243" y="758" text-anchor="start" class="s" fill="#123B5A" stroke="#123B5A" textLength="51.59" lengthAdjust="spacingAndGlyphs" >Other</text><text x="551.5" y="758" text-anchor="middle" class="s" fill="#123B5A" stroke="#123B5A" textLength="11.49" lengthAdjust="spacingAndGlyphs" >1</text><rect x="788.3" y="750.8" width="5.4" height="2.6" fill="#123B5A" rx="1"/><text x="946" y="758" text-anchor="end" class="s" fill="#123B5A" stroke="#123B5A" textLength="47.89" lengthAdjust="spacingAndGlyphs" >0.0%</text><rect x="1022" y="750.8" width="5.4" height="2.6" fill="#163A6C" rx="1"/><rect x="1132" y="750.8" width="5.4" height="2.6" fill="#163A6C" rx="1"/><rect x="1242" y="750.8" width="5.4" height="2.6" fill="#163A6C" rx="1"/><rect x="1352" y="750.8" width="5.4" height="2.6" fill="#163A6C" rx="1"/><rect x="1462" y="750.8" width="5.4" height="2.6" fill="#163A6C" rx="1"/><rect x="1572" y="750.8" width="5.4" height="2.6" fill="#163A6C" rx="1"/><rect x="1682" y="750.8" width="5.4" height="2.6" fill="#163A6C" rx="1"/><rect x="1792" y="750.8" width="5.4" height="2.6" fill="#163A6C" rx="1"/><rect x="1902.5" y="750.8" width="5.4" height="2.6" fill="#163A6C" rx="1"/><rect x="2012.5" y="750.8" width="5.4" height="2.6" fill="#163A6C" rx="1"/><rect x="2122.5" y="750.8" width="5.4" height="2.6" fill="#163A6C" rx="1"/><rect x="2232.5" y="750.8" width="5.4" height="2.6" fill="#163A6C" rx="1"/><rect x="2340" y="750.8" width="5.4" height="2.6" fill="#163A6C" rx="1"/><rect x="2450" y="750.8" width="5.4" height="2.6" fill="#163A6C" rx="1"/><text x="243" y="786" text-anchor="start" class="s" fill="#123B5A" stroke="#123B5A" textLength="51.59" lengthAdjust="spacingAndGlyphs" >Other</text><text x="551.5" y="786" text-anchor="middle" class="s" fill="#123B5A" stroke="#123B5A" textLength="11.49" lengthAdjust="spacingAndGlyphs" >1</text><rect x="788.3" y="778.8" width="5.4" height="2.6" fill="#123B5A" rx="1"/><text x="946" y="786" text-anchor="end" class="s" fill="#123B5A" stroke="#123B5A" textLength="47.89" lengthAdjust="spacingAndGlyphs" >0.0%</text><rect x="1022" y="778.8" width="5.4" height="2.6" fill="#163A6C" rx="1"/><rect x="1132" y="778.8" width="5.4" height="2.6" fill="#163A6C" rx="1"/><rect x="1242" y="778.8" width="5.4" height="2.6" fill="#163A6C" rx="1"/><rect x="1352" y="778.8" width="5.4" height="2.6" fill="#163A6C" rx="1"/><rect x="1462" y="778.8" width="5.4" height="2.6" fill="#163A6C" rx="1"/><rect x="1572" y="778.8" width="5.4" height="2.6" fill="#163A6C" rx="1"/><rect x="1682" y="778.8" width="5.4" height="2.6" fill="#163A6C" rx="1"/><rect x="1792" y="778.8" width="5.4" height="2.6" fill="#163A6C" rx="1"/><rect x="1902.5" y="778.8" width="5.4" height="2.6" fill="#163A6C" rx="1"/><rect x="2012.5" y="778.8" width="5.4" height="2.6" fill="#163A6C" rx="1"/><rect x="2122.5" y="778.8" width="5.4" height="2.6" fill="#163A6C" rx="1"/><rect x="2232.5" y="778.8" width="5.4" height="2.6" fill="#163A6C" rx="1"/><rect x="2340" y="778.8" width="5.4" height="2.6" fill="#163A6C" rx="1"/><rect x="2450" y="778.8" width="5.4" height="2.6" fill="#163A6C" rx="1"/><text x="243" y="814" text-anchor="start" class="s" fill="#123B5A" stroke="#123B5A" textLength="51.59" lengthAdjust="spacingAndGlyphs" >Other</text><text x="551.5" y="814" text-anchor="middle" class="s" fill="#123B5A" stroke="#123B5A" textLength="11.49" lengthAdjust="spacingAndGlyphs" >1</text><rect x="788.3" y="806.8" width="5.4" height="2.6" fill="#123B5A" rx="1"/><text x="946" y="814" text-anchor="end" class="s" fill="#123B5A" stroke="#123B5A" textLength="47.89" lengthAdjust="spacingAndGlyphs" >0.0%</text><rect x="1022" y="806.8" width="5.4" height="2.6" fill="#163A6C" rx="1"/><rect x="1132" y="806.8" width="5.4" height="2.6" fill="#163A6C" rx="1"/><rect x="1242" y="806.8" width="5.4" height="2.6" fill="#163A6C" rx="1"/><rect x="1352" y="806.8" width="5.4" height="2.6" fill="#163A6C" rx="1"/><rect x="1462" y="806.8" width="5.4" height="2.6" fill="#163A6C" rx="1"/><rect x="1572" y="806.8" width="5.4" height="2.6" fill="#163A6C" rx="1"/><rect x="1682" y="806.8" width="5.4" height="2.6" fill="#163A6C" rx="1"/><rect x="1792" y="806.8" width="5.4" height="2.6" fill="#163A6C" rx="1"/><rect x="1902.5" y="806.8" width="5.4" height="2.6" fill="#163A6C" rx="1"/><rect x="2012.5" y="806.8" width="5.4" height="2.6" fill="#163A6C" rx="1"/><rect x="2122.5" y="806.8" width="5.4" height="2.6" fill="#163A6C" rx="1"/><rect x="2232.5" y="806.8" width="5.4" height="2.6" fill="#163A6C" rx="1"/><rect x="2340" y="806.8" width="5.4" height="2.6" fill="#163A6C" rx="1"/><rect x="2450" y="806.8" width="5.4" height="2.6" fill="#163A6C" rx="1"/><text x="243" y="842" text-anchor="start" class="s" fill="#123B5A" stroke="#123B5A" textLength="51.59" lengthAdjust="spacingAndGlyphs" >Other</text><text x="551.5" y="842" text-anchor="middle" class="s" fill="#123B5A" stroke="#123B5A" textLength="11.49" lengthAdjust="spacingAndGlyphs" >1</text><rect x="788.3" y="834.8" width="5.4" height="2.6" fill="#123B5A" rx="1"/><text x="946" y="842" text-anchor="end" class="s" fill="#123B5A" stroke="#123B5A" textLength="47.89" lengthAdjust="spacingAndGlyphs" >0.0%</text><rect x="1022" y="834.8" width="5.4" height="2.6" fill="#163A6C" rx="1"/><rect x="1132" y="834.8" width="5.4" height="2.6" fill="#163A6C" rx="1"/><rect x="1242" y="834.8" width="5.4" height="2.6" fill="#163A6C" rx="1"/><rect x="1352" y="834.8" width="5.4" height="2.6" fill="#163A6C" rx="1"/><rect x="1462" y="834.8" width="5.4" height="2.6" fill="#163A6C" rx="1"/><rect x="1572" y="834.8" width="5.4" height="2.6" fill="#163A6C" rx="1"/><rect x="1682" y="834.8" width="5.4" height="2.6" fill="#163A6C" rx="1"/><rect x="1792" y="834.8" width="5.4" height="2.6" fill="#163A6C" rx="1"/><rect x="1902.5" y="834.8" width="5.4" height="2.6" fill="#163A6C" rx="1"/><rect x="2012.5" y="834.8" width="5.4" height="2.6" fill="#163A6C" rx="1"/><rect x="2122.5" y="834.8" width="5.4" height="2.6" fill="#163A6C" rx="1"/><rect x="2232.5" y="834.8" width="5.4" height="2.6" fill="#163A6C" rx="1"/><rect x="2340" y="834.8" width="5.4" height="2.6" fill="#163A6C" rx="1"/><rect x="2450" y="834.8" width="5.4" height="2.6" fill="#163A6C" rx="1"/><text x="243" y="870" text-anchor="start" class="s" fill="#123B5A" stroke="#123B5A" textLength="51.59" lengthAdjust="spacingAndGlyphs" >Other</text><text x="551.5" y="870" text-anchor="middle" class="s" fill="#123B5A" stroke="#123B5A" textLength="11.49" lengthAdjust="spacingAndGlyphs" >1</text><rect x="788.3" y="862.8" width="5.4" height="2.6" fill="#123B5A" rx="1"/><text x="946" y="870" text-anchor="end" class="s" fill="#123B5A" stroke="#123B5A" textLength="47.89" lengthAdjust="spacingAndGlyphs" >0.0%</text><rect x="1022" y="862.8" width="5.4" height="2.6" fill="#163A6C" rx="1"/><rect x="1132" y="862.8" width="5.4" height="2.6" fill="#163A6C" rx="1"/><rect x="1242" y="862.8" width="5.4" height="2.6" fill="#163A6C" rx="1"/><rect x="1352" y="862.8" width="5.4" height="2.6" fill="#163A6C" rx="1"/><rect x="1462" y="862.8" width="5.4" height="2.6" fill="#163A6C" rx="1"/><rect x="1572" y="862.8" width="5.4" height="2.6" fill="#163A6C" rx="1"/><rect x="1682" y="862.8" width="5.4" height="2.6" fill="#163A6C" rx="1"/><rect x="1792" y="862.8" width="5.4" height="2.6" fill="#163A6C" rx="1"/><rect x="1902.5" y="862.8" width="5.4" height="2.6" fill="#163A6C" rx="1"/><rect x="2012.5" y="862.8" width="5.4" height="2.6" fill="#163A6C" rx="1"/><rect x="2122.5" y="862.8" width="5.4" height="2.6" fill="#163A6C" rx="1"/><rect x="2232.5" y="862.8" width="5.4" height="2.6" fill="#163A6C" rx="1"/><rect x="2340" y="862.8" width="5.4" height="2.6" fill="#163A6C" rx="1"/><rect x="2450" y="862.8" width="5.4" height="2.6" fill="#163A6C" rx="1"/><text x="243" y="926" text-anchor="start" class="s" fill="#123B5A" stroke="#123B5A" textLength="270.30" lengthAdjust="spacingAndGlyphs" >Social Security Contributions</text><text x="946" y="926" text-anchor="end" class="s" fill="#123B5A" stroke="#123B5A" textLength="59.39" lengthAdjust="spacingAndGlyphs" >10.0%</text><rect x="1022" y="918.8" width="5.4" height="2.6" fill="#163A6C" rx="1"/><text x="1161" y="926" text-anchor="end" class="s" fill="#163A6C" stroke="#163A6C" textLength="34.48" lengthAdjust="spacingAndGlyphs" >780</text><text x="1271" y="926" text-anchor="end" class="s" fill="#163A6C" stroke="#163A6C" textLength="51.73" lengthAdjust="spacingAndGlyphs" >1,442</text><text x="1381" y="926" text-anchor="end" class="s" fill="#163A6C" stroke="#163A6C" textLength="51.73" lengthAdjust="spacingAndGlyphs" >1,522</text><text x="1491" y="926" text-anchor="end" class="s" fill="#163A6C" stroke="#163A6C" textLength="51.73" lengthAdjust="spacingAndGlyphs" >1,601</text><text x="1601" y="926" text-anchor="end" class="s" fill="#163A6C" stroke="#163A6C" textLength="51.73" lengthAdjust="spacingAndGlyphs" >1,680</text><text x="1711" y="926" text-anchor="end" class="s" fill="#163A6C" stroke="#163A6C" textLength="51.73" lengthAdjust="spacingAndGlyphs" >1,759</text><text x="1821" y="926" text-anchor="end" class="s" fill="#163A6C" stroke="#163A6C" textLength="51.73" lengthAdjust="spacingAndGlyphs" >1,838</text><text x="1931.5" y="926" text-anchor="end" class="s" fill="#163A6C" stroke="#163A6C" textLength="51.73" lengthAdjust="spacingAndGlyphs" >1,917</text><text x="2041.5" y="926" text-anchor="end" class="s" fill="#163A6C" stroke="#163A6C" textLength="51.73" lengthAdjust="spacingAndGlyphs" >1,996</text><text x="2151.5" y="926" text-anchor="end" class="s" fill="#163A6C" stroke="#163A6C" textLength="51.73" lengthAdjust="spacingAndGlyphs" >2,076</text><text x="2261.5" y="926" text-anchor="end" class="s" fill="#163A6C" stroke="#163A6C" textLength="51.73" lengthAdjust="spacingAndGlyphs" >2,155</text><text x="2369" y="926" text-anchor="end" class="s" fill="#163A6C" stroke="#163A6C" textLength="51.73" lengthAdjust="spacingAndGlyphs" >2,234</text><text x="2479" y="926" text-anchor="end" class="s" fill="#163A6C" stroke="#163A6C" textLength="51.73" lengthAdjust="spacingAndGlyphs" >2,313</text><text x="243" y="954" text-anchor="start" class="s" fill="#123B5A" stroke="#123B5A" textLength="185.25" lengthAdjust="spacingAndGlyphs" >Other Payroll Taxes</text><text x="946" y="954" text-anchor="end" class="s" fill="#123B5A" stroke="#123B5A" textLength="47.89" lengthAdjust="spacingAndGlyphs" >0.0%</text><rect x="1022" y="946.8" width="5.4" height="2.6" fill="#163A6C" rx="1"/><rect x="1132" y="946.8" width="5.4" height="2.6" fill="#163A6C" rx="1"/><rect x="1242" y="946.8" width="5.4" height="2.6" fill="#163A6C" rx="1"/><rect x="1352" y="946.8" width="5.4" height="2.6" fill="#163A6C" rx="1"/><rect x="1462" y="946.8" width="5.4" height="2.6" fill="#163A6C" rx="1"/><rect x="1572" y="946.8" width="5.4" height="2.6" fill="#163A6C" rx="1"/><rect x="1682" y="946.8" width="5.4" height="2.6" fill="#163A6C" rx="1"/><rect x="1792" y="946.8" width="5.4" height="2.6" fill="#163A6C" rx="1"/><rect x="1902.5" y="946.8" width="5.4" height="2.6" fill="#163A6C" rx="1"/><rect x="2012.5" y="946.8" width="5.4" height="2.6" fill="#163A6C" rx="1"/><rect x="2122.5" y="946.8" width="5.4" height="2.6" fill="#163A6C" rx="1"/><rect x="2232.5" y="946.8" width="5.4" height="2.6" fill="#163A6C" rx="1"/><rect x="2340" y="946.8" width="5.4" height="2.6" fill="#163A6C" rx="1"/><rect x="2450" y="946.8" width="5.4" height="2.6" fill="#163A6C" rx="1"/><text x="243" y="982" text-anchor="start" class="s" fill="#123B5A" stroke="#123B5A" textLength="90.77" lengthAdjust="spacingAndGlyphs" >Insurance</text><text x="946" y="982" text-anchor="end" class="s" fill="#123B5A" stroke="#123B5A" textLength="47.89" lengthAdjust="spacingAndGlyphs" >1.7%</text><rect x="1022" y="974.8" width="5.4" height="2.6" fill="#163A6C" rx="1"/><text x="1161" y="982" text-anchor="end" class="s" fill="#163A6C" stroke="#163A6C" textLength="34.48" lengthAdjust="spacingAndGlyphs" >129</text><text x="1271" y="982" text-anchor="end" class="s" fill="#163A6C" stroke="#163A6C" textLength="34.48" lengthAdjust="spacingAndGlyphs" >239</text><text x="1381" y="982" text-anchor="end" class="s" fill="#163A6C" stroke="#163A6C" textLength="34.48" lengthAdjust="spacingAndGlyphs" >253</text><text x="1491" y="982" text-anchor="end" class="s" fill="#163A6C" stroke="#163A6C" textLength="34.48" lengthAdjust="spacingAndGlyphs" >266</text><text x="1601" y="982" text-anchor="end" class="s" fill="#163A6C" stroke="#163A6C" textLength="34.48" lengthAdjust="spacingAndGlyphs" >279</text><text x="1711" y="982" text-anchor="end" class="s" fill="#163A6C" stroke="#163A6C" textLength="34.48" lengthAdjust="spacingAndGlyphs" >292</text><text x="1821" y="982" text-anchor="end" class="s" fill="#163A6C" stroke="#163A6C" textLength="34.48" lengthAdjust="spacingAndGlyphs" >305</text><text x="1931.5" y="982" text-anchor="end" class="s" fill="#163A6C" stroke="#163A6C" textLength="34.48" lengthAdjust="spacingAndGlyphs" >318</text><text x="2041.5" y="982" text-anchor="end" class="s" fill="#163A6C" stroke="#163A6C" textLength="34.48" lengthAdjust="spacingAndGlyphs" >331</text><text x="2151.5" y="982" text-anchor="end" class="s" fill="#163A6C" stroke="#163A6C" textLength="34.48" lengthAdjust="spacingAndGlyphs" >345</text><text x="2261.5" y="982" text-anchor="end" class="s" fill="#163A6C" stroke="#163A6C" textLength="34.48" lengthAdjust="spacingAndGlyphs" >358</text><text x="2369" y="982" text-anchor="end" class="s" fill="#163A6C" stroke="#163A6C" textLength="34.48" lengthAdjust="spacingAndGlyphs" >371</text><text x="2479" y="982" text-anchor="end" class="s" fill="#163A6C" stroke="#163A6C" textLength="34.48" lengthAdjust="spacingAndGlyphs" >384</text><text x="215" y="1038" text-anchor="start" class="s" fill="#000" stroke="#000" textLength="444.90" lengthAdjust="spacingAndGlyphs" >Total Business Development Salaries &amp; Benefits</text><rect x="1022" y="1030.8" width="5.4" height="2.6" fill="#000" rx="1"/><text x="1161" y="1038" text-anchor="end" class="s" fill="#000" stroke="#000" textLength="51.73" lengthAdjust="spacingAndGlyphs" >8,709</text><text x="1271" y="1038" text-anchor="end" class="s" fill="#000" stroke="#000" textLength="63.22" lengthAdjust="spacingAndGlyphs" >16,107</text><text x="1381" y="1038" text-anchor="end" class="s" fill="#000" stroke="#000" textLength="63.22" lengthAdjust="spacingAndGlyphs" >16,990</text><text x="1491" y="1038" text-anchor="end" class="s" fill="#000" stroke="#000" textLength="63.22" lengthAdjust="spacingAndGlyphs" >17,874</text><text x="1601" y="1038" text-anchor="end" class="s" fill="#000" stroke="#000" textLength="63.22" lengthAdjust="spacingAndGlyphs" >18,757</text><text x="1711" y="1038" text-anchor="end" class="s" fill="#000" stroke="#000" textLength="63.22" lengthAdjust="spacingAndGlyphs" >19,641</text><text x="1821" y="1038" text-anchor="end" class="s" fill="#000" stroke="#000" textLength="63.22" lengthAdjust="spacingAndGlyphs" >20,524</text><text x="1931.5" y="1038" text-anchor="end" class="s" fill="#000" stroke="#000" textLength="63.22" lengthAdjust="spacingAndGlyphs" >21,408</text><text x="2041.5" y="1038" text-anchor="end" class="s" fill="#000" stroke="#000" textLength="63.22" lengthAdjust="spacingAndGlyphs" >22,292</text><text x="2151.5" y="1038" text-anchor="end" class="s" fill="#000" stroke="#000" textLength="63.22" lengthAdjust="spacingAndGlyphs" >23,175</text><text x="2261.5" y="1038" text-anchor="end" class="s" fill="#000" stroke="#000" textLength="63.22" lengthAdjust="spacingAndGlyphs" >24,059</text><text x="2369" y="1038" text-anchor="end" class="s" fill="#000" stroke="#000" textLength="63.22" lengthAdjust="spacingAndGlyphs" >24,942</text><text x="2479" y="1038" text-anchor="end" class="s" fill="#000" stroke="#000" textLength="63.22" lengthAdjust="spacingAndGlyphs" >25,826</text><text x="2589" y="1038" text-anchor="end" class="s" fill="#000" stroke="#000" textLength="63.22" lengthAdjust="spacingAndGlyphs" >26,709</text><text x="215" y="1066" text-anchor="start" class="s" fill="#000" stroke="#000" textLength="372.84" lengthAdjust="spacingAndGlyphs" >Total Business Development Headcount</text><rect x="1022" y="1058.8" width="5.4" height="2.6" fill="#000" rx="1"/><text x="1161" y="1066" text-anchor="end" class="s" fill="#000" stroke="#000" textLength="11.49" lengthAdjust="spacingAndGlyphs" >3</text><text x="1271" y="1066" text-anchor="end" class="s" fill="#000" stroke="#000" textLength="11.49" lengthAdjust="spacingAndGlyphs" >4</text><text x="1381" y="1066" text-anchor="end" class="s" fill="#000" stroke="#000" textLength="11.49" lengthAdjust="spacingAndGlyphs" >5</text><text x="1491" y="1066" text-anchor="end" class="s" fill="#000" stroke="#000" textLength="11.49" lengthAdjust="spacingAndGlyphs" >5</text><text x="1601" y="1066" text-anchor="end" class="s" fill="#000" stroke="#000" textLength="11.49" lengthAdjust="spacingAndGlyphs" >5</text><text x="1711" y="1066" text-anchor="end" class="s" fill="#000" stroke="#000" textLength="11.49" lengthAdjust="spacingAndGlyphs" >6</text><text x="1821" y="1066" text-anchor="end" class="s" fill="#000" stroke="#000" textLength="11.49" lengthAdjust="spacingAndGlyphs" >6</text><text x="1931.5" y="1066" text-anchor="end" class="s" fill="#000" stroke="#000" textLength="11.49" lengthAdjust="spacingAndGlyphs" >6</text><text x="2041.5" y="1066" text-anchor="end" class="s" fill="#000" stroke="#000" textLength="11.49" lengthAdjust="spacingAndGlyphs" >6</text><text x="2151.5" y="1066" text-anchor="end" class="s" fill="#000" stroke="#000" textLength="11.49" lengthAdjust="spacingAndGlyphs" >7</text><text x="2261.5" y="1066" text-anchor="end" class="s" fill="#000" stroke="#000" textLength="11.49" lengthAdjust="spacingAndGlyphs" >7</text><text x="2369" y="1066" text-anchor="end" class="s" fill="#000" stroke="#000" textLength="11.49" lengthAdjust="spacingAndGlyphs" >7</text><text x="2479" y="1066" text-anchor="end" class="s" fill="#000" stroke="#000" textLength="11.49" lengthAdjust="spacingAndGlyphs" >8</text><text x="215" y="1122" text-anchor="start" class="sb" fill="#000" stroke="#000" textLength="50.67" lengthAdjust="spacingAndGlyphs" >Sales</text><text x="551.5" y="1122" text-anchor="middle" class="s" fill="#000" stroke="#000" textLength="59.67" lengthAdjust="spacingAndGlyphs" >Month</text><text x="729.5" y="1122" text-anchor="middle" class="s" fill="#000" stroke="#000" textLength="179.02" lengthAdjust="spacingAndGlyphs" >Base Annual Salary</text><text x="889.5" y="1122" text-anchor="middle" class="s" fill="#000" stroke="#000" textLength="100.14" lengthAdjust="spacingAndGlyphs" >Benefits %</text><text x="243" y="1150" text-anchor="start" class="s" fill="#123B5A" stroke="#123B5A" textLength="171.14" lengthAdjust="spacingAndGlyphs" >Manager Assistant</text><text x="551.5" y="1150" text-anchor="middle" class="s" fill="#123B5A" stroke="#123B5A" textLength="11.49" lengthAdjust="spacingAndGlyphs" >5</text><text x="819" y="1150" text-anchor="end" class="s" fill="#123B5A" stroke="#123B5A" textLength="63.22" lengthAdjust="spacingAndGlyphs" >40,000</text><text x="946" y="1150" text-anchor="end" class="s" fill="#123B5A" stroke="#123B5A" textLength="47.89" lengthAdjust="spacingAndGlyphs" >0.0%</text><rect x="1022" y="1142.8" width="5.4" height="2.6" fill="#163A6C" rx="1"/><rect x="1132" y="1142.8" width="5.4" height="2.6" fill="#163A6C" rx="1"/><rect x="1242" y="1142.8" width="5.4" height="2.6" fill="#163A6C" rx="1"/><rect x="1352" y="1142.8" width="5.4" height="2.6" fill="#163A6C" rx="1"/><text x="1491" y="1150" text-anchor="end" class="s" fill="#163A6C" stroke="#163A6C" textLength="51.73" lengthAdjust="spacingAndGlyphs" >3,333</text><text x="1601" y="1150" text-anchor="end" class="s" fill="#163A6C" stroke="#163A6C" textLength="51.73" lengthAdjust="spacingAndGlyphs" >3,333</text><text x="1711" y="1150" text-anchor="end" class="s" fill="#163A6C" stroke="#163A6C" textLength="51.73" lengthAdjust="spacingAndGlyphs" >3,333</text><text x="1821" y="1150" text-anchor="end" class="s" fill="#163A6C" stroke="#163A6C" textLength="51.73" lengthAdjust="spacingAndGlyphs" >3,333</text><text x="1931.5" y="1150" text-anchor="end" class="s" fill="#163A6C" stroke="#163A6C" textLength="51.73" lengthAdjust="spacingAndGlyphs" >3,333</text><text x="2041.5" y="1150" text-anchor="end" class="s" fill="#163A6C" stroke="#163A6C" textLength="51.73" lengthAdjust="spacingAndGlyphs" >3,333</text><text x="2151.5" y="1150" text-anchor="end" class="s" fill="#163A6C" stroke="#163A6C" textLength="51.73" lengthAdjust="spacingAndGlyphs" >3,333</text><text x="2261.5" y="1150" text-anchor="end" class="s" fill="#163A6C" stroke="#163A6C" textLength="51.73" lengthAdjust="spacingAndGlyphs" >3,333</text><text x="2369" y="1150" text-anchor="end" class="s" fill="#163A6C" stroke="#163A6C" textLength="51.73" lengthAdjust="spacingAndGlyphs" >3,333</text><text x="2479" y="1150" text-anchor="end" class="s" fill="#163A6C" stroke="#163A6C" textLength="51.73" lengthAdjust="spacingAndGlyphs" >3,333</text><text x="243" y="1178" text-anchor="start" class="s" fill="#123B5A" stroke="#123B5A" textLength="178.17" lengthAdjust="spacingAndGlyphs" >Customer Assistant</text><text x="551.5" y="1178" text-anchor="middle" class="s" fill="#123B5A" stroke="#123B5A" textLength="11.49" lengthAdjust="spacingAndGlyphs" >5</text><text x="819" y="1178" text-anchor="end" class="s" fill="#123B5A" stroke="#123B5A" textLength="63.22" lengthAdjust="spacingAndGlyphs" >35,000</text><text x="946" y="1178" text-anchor="end" class="s" fill="#123B5A" stroke="#123B5A" textLength="47.89" lengthAdjust="spacingAndGlyphs" >0.0%</text><rect x="1022" y="1170.8" width="5.4" height="2.6" fill="#163A6C" rx="1"/><rect x="1132" y="1170.8" width="5.4" height="2.6" fill="#163A6C" rx="1"/><rect x="1242" y="1170.8" width="5.4" height="2.6" fill="#163A6C" rx="1"/><rect x="1352" y="1170.8" width="5.4" height="2.6" fill="#163A6C" rx="1"/><text x="1491" y="1178" text-anchor="end" class="s" fill="#163A6C" stroke="#163A6C" textLength="51.73" lengthAdjust="spacingAndGlyphs" >2,917</text><text x="1601" y="1178" text-anchor="end" class="s" fill="#163A6C" stroke="#163A6C" textLength="51.73" lengthAdjust="spacingAndGlyphs" >2,917</text><text x="1711" y="1178" text-anchor="end" class="s" fill="#163A6C" stroke="#163A6C" textLength="51.73" lengthAdjust="spacingAndGlyphs" >2,917</text><text x="1821" y="1178" text-anchor="end" class="s" fill="#163A6C" stroke="#163A6C" textLength="51.73" lengthAdjust="spacingAndGlyphs" >2,917</text><text x="1931.5" y="1178" text-anchor="end" class="s" fill="#163A6C" stroke="#163A6C" textLength="51.73" lengthAdjust="spacingAndGlyphs" >2,917</text><text x="2041.5" y="1178" text-anchor="end" class="s" fill="#163A6C" stroke="#163A6C" textLength="51.73" lengthAdjust="spacingAndGlyphs" >2,917</text><text x="2151.5" y="1178" text-anchor="end" class="s" fill="#163A6C" stroke="#163A6C" textLength="51.73" lengthAdjust="spacingAndGlyphs" >2,917</text><text x="2261.5" y="1178" text-anchor="end" class="s" fill="#163A6C" stroke="#163A6C" textLength="51.73" lengthAdjust="spacingAndGlyphs" >2,917</text><text x="2369" y="1178" text-anchor="end" class="s" fill="#163A6C" stroke="#163A6C" textLength="51.73" lengthAdjust="spacingAndGlyphs" >2,917</text><text x="2479" y="1178" text-anchor="end" class="s" fill="#163A6C" stroke="#163A6C" textLength="51.73" lengthAdjust="spacingAndGlyphs" >2,917</text></g><rect x="949" y="0" width="1" height="1168" fill="#9B9B9B" /><rect x="40" y="147" width="2490" height="1" fill="#9B9B9B" /><rect x="629.5" y="203.5" width="201" height="28" fill="none" stroke="#217346" stroke-width="3"/><rect x="630.5" y="204.5" width="199" height="26" fill="none" stroke="#FFFFFF" stroke-width="1"/><rect x="826.5" y="228.5" width="6" height="6" fill="#217346" stroke="#fff" stroke-width="1"/><rect x="6.5" y="2.5" width="26" height="53" fill="#E6E6E6" stroke="#707070" stroke-width="1"/><rect x="7.5" y="3.5" width="24" height="24" fill="none" stroke="#FFFFFF" stroke-width="1"/><rect x="7.5" y="29.5" width="24" height="25" fill="none" stroke="#FFFFFF" stroke-width="1"/><rect x="6" y="27.8" width="27" height="1.6" fill="#707070"/><text x="19.7" y="20.3" text-anchor="middle" class="ol">1</text><text x="19.7" y="46.8" text-anchor="middle" class="ol">2</text><rect x="951" y="12" width="1578" height="2" fill="#8C8C8C"/><rect x="951" y="12" width="2" height="6" fill="#8C8C8C"/><rect x="1005.75" y="39.25" width="1.5" height="1.5" fill="#8C8C8C"/><rect x="1117.75" y="39.25" width="1.5" height="1.5" fill="#8C8C8C"/><rect x="1227.75" y="39.25" width="1.5" height="1.5" fill="#8C8C8C"/><rect x="1337.75" y="39.25" width="1.5" height="1.5" fill="#8C8C8C"/><rect x="1447.75" y="39.25" width="1.5" height="1.5" fill="#8C8C8C"/><rect x="1557.75" y="39.25" width="1.5" height="1.5" fill="#8C8C8C"/><rect x="1667.75" y="39.25" width="1.5" height="1.5" fill="#8C8C8C"/><rect x="1777.75" y="39.25" width="1.5" height="1.5" fill="#8C8C8C"/><rect x="1888.0" y="39.25" width="1.5" height="1.5" fill="#8C8C8C"/><rect x="1998.25" y="39.25" width="1.5" height="1.5" fill="#8C8C8C"/><rect x="2108.25" y="39.25" width="1.5" height="1.5" fill="#8C8C8C"/><rect x="2218.25" y="39.25" width="1.5" height="1.5" fill="#8C8C8C"/><rect x="2327.0" y="39.25" width="1.5" height="1.5" fill="#8C8C8C"/><rect x="2435.75" y="39.25" width="1.5" height="1.5" fill="#8C8C8C"/><rect x="40" y="59" width="2490" height="28" fill="#E6E6E6"/><rect x="629" y="59" width="201" height="28" fill="#D2D2D2"/><rect x="629" y="85" width="201" height="2.2" fill="#217346"/><rect x="0" y="87" width="2530" height="1" fill="#ABABAB"/><rect x="210" y="57" width="1" height="30" fill="#C6C6C6"/><rect x="239" y="57" width="1" height="30" fill="#C6C6C6"/><rect x="474" y="57" width="1" height="30" fill="#C6C6C6"/><rect x="629" y="57" width="1" height="30" fill="#C6C6C6"/><rect x="830" y="57" width="1" height="30" fill="#C6C6C6"/><rect x="1063" y="57" width="1" height="30" fill="#C6C6C6"/><rect x="1173" y="57" width="1" height="30" fill="#C6C6C6"/><rect x="1283" y="57" width="1" height="30" fill="#C6C6C6"/><rect x="1393" y="57" width="1" height="30" fill="#C6C6C6"/><rect x="1503" y="57" width="1" height="30" fill="#C6C6C6"/><rect x="1613" y="57" width="1" height="30" fill="#C6C6C6"/><rect x="1723" y="57" width="1" height="30" fill="#C6C6C6"/><rect x="1833" y="57" width="1" height="30" fill="#C6C6C6"/><rect x="1943.5" y="57" width="1" height="30" fill="#C6C6C6"/><rect x="2053.5" y="57" width="1" height="30" fill="#C6C6C6"/><rect x="2163.5" y="57" width="1" height="30" fill="#C6C6C6"/><rect x="2273.5" y="57" width="1" height="30" fill="#C6C6C6"/><rect x="2381" y="57" width="1" height="30" fill="#C6C6C6"/><rect x="2491" y="57" width="1" height="30" fill="#C6C6C6"/><rect x="949" y="0" width="1" height="1168" fill="#9B9B9B"/><text x="125.0" y="82" text-anchor="middle" class="hd" fill="#000">A</text><text x="224.5" y="82" text-anchor="middle" class="hd" fill="#000">B</text><text x="356.5" y="82" text-anchor="middle" class="hd" fill="#000">C</text><text x="551.5" y="82" text-anchor="middle" class="hd" fill="#000">D</text><text x="729.5" y="82" text-anchor="middle" class="hd" fill="#217346">E</text><text x="889.5" y="82" text-anchor="middle" class="hd" fill="#000">F</text><text x="1006.0" y="82" text-anchor="middle" class="hd" fill="#000">G</text><text x="1118.0" y="82" text-anchor="middle" class="hd" fill="#000">H</text><text x="1228.0" y="82" text-anchor="middle" class="hd" fill="#000">I</text><text x="1338.0" y="82" text-anchor="middle" class="hd" fill="#000">J</text><text x="1448.0" y="82" text-anchor="middle" class="hd" fill="#000">K</text><text x="1558.0" y="82" text-anchor="middle" class="hd" fill="#000">L</text><text x="1668.0" y="82" text-anchor="middle" class="hd" fill="#000">M</text><text x="1778.0" y="82" text-anchor="middle" class="hd" fill="#000">N</text><text x="1888.25" y="82" text-anchor="middle" class="hd" fill="#000">O</text><text x="1998.5" y="82" text-anchor="middle" class="hd" fill="#000">P</text><text x="2108.5" y="82" text-anchor="middle" class="hd" fill="#000">Q</text><text x="2218.5" y="82" text-anchor="middle" class="hd" fill="#000">R</text><text x="2327.25" y="82" text-anchor="middle" class="hd" fill="#000">S</text><text x="2436.0" y="82" text-anchor="middle" class="hd" fill="#000">T</text><polygon points="36,64 36,84 16,84" fill="#BDBDBD"/><rect x="39" y="59" width="1" height="1109" fill="#ABABAB"/><rect x="0" y="91" width="39" height="1" fill="#C6C6C6"/><text x="19" y="114" text-anchor="middle" class="hd" fill="#000">2</text><rect x="0" y="119" width="39" height="1" fill="#C6C6C6"/><text x="19" y="142" text-anchor="middle" class="hd" fill="#000">3</text><rect x="0" y="147" width="39" height="1" fill="#C6C6C6"/><text x="19" y="170" text-anchor="middle" class="hd" fill="#000">4</text><rect x="0" y="175" width="39" height="1" fill="#C6C6C6"/><text x="19" y="198" text-anchor="middle" class="hd" fill="#000">5</text><rect x="0" y="203" width="39" height="28" fill="#D2D2D2"/><rect x="37" y="203" width="3" height="28" fill="#217346"/><rect x="0" y="203" width="39" height="1" fill="#C6C6C6"/><text x="19" y="226" text-anchor="middle" class="hd" fill="#217346">6</text><rect x="0" y="231" width="39" height="1" fill="#C6C6C6"/><text x="19" y="254" text-anchor="middle" class="hd" fill="#000">7</text><rect x="0" y="259" width="39" height="1" fill="#C6C6C6"/><text x="19" y="282" text-anchor="middle" class="hd" fill="#000">8</text><rect x="0" y="287" width="39" height="1" fill="#C6C6C6"/><text x="19" y="310" text-anchor="middle" class="hd" fill="#000">9</text><rect x="0" y="315" width="39" height="1" fill="#C6C6C6"/><text x="19" y="338" text-anchor="middle" class="hd" fill="#000">10</text><rect x="0" y="343" width="39" height="1" fill="#C6C6C6"/><text x="19" y="366" text-anchor="middle" class="hd" fill="#000">11</text><rect x="0" y="371" width="39" height="1" fill="#C6C6C6"/><text x="19" y="394" text-anchor="middle" class="hd" fill="#000">12</text><rect x="0" y="399" width="39" height="1" fill="#C6C6C6"/><text x="19" y="422" text-anchor="middle" class="hd" fill="#000">13</text><rect x="0" y="427" width="39" height="1" fill="#C6C6C6"/><text x="19" y="450" text-anchor="middle" class="hd" fill="#000">14</text><rect x="0" y="455" width="39" height="1" fill="#C6C6C6"/><text x="19" y="478" text-anchor="middle" class="hd" fill="#000">15</text><rect x="0" y="483" width="39" height="1" fill="#C6C6C6"/><text x="19" y="506" text-anchor="middle" class="hd" fill="#000">16</text><rect x="0" y="511" width="39" height="1" fill="#C6C6C6"/><text x="19" y="534" text-anchor="middle" class="hd" fill="#000">17</text><rect x="0" y="539" width="39" height="1" fill="#C6C6C6"/><text x="19" y="562" text-anchor="middle" class="hd" fill="#000">18</text><rect x="0" y="567" width="39" height="1" fill="#C6C6C6"/><text x="19" y="590" text-anchor="middle" class="hd" fill="#000">19</text><rect x="0" y="595" width="39" height="1" fill="#C6C6C6"/><text x="19" y="618" text-anchor="middle" class="hd" fill="#000">20</text><rect x="0" y="623" width="39" height="1" fill="#C6C6C6"/><text x="19" y="646" text-anchor="middle" class="hd" fill="#000">21</text><rect x="0" y="651" width="39" height="1" fill="#C6C6C6"/><text x="19" y="674" text-anchor="middle" class="hd" fill="#000">22</text><rect x="0" y="679" width="39" height="1" fill="#C6C6C6"/><text x="19" y="702" text-anchor="middle" class="hd" fill="#000">23</text><rect x="0" y="707" width="39" height="1" fill="#C6C6C6"/><text x="19" y="730" text-anchor="middle" class="hd" fill="#000">24</text><rect x="0" y="735" width="39" height="1" fill="#C6C6C6"/><text x="19" y="758" text-anchor="middle" class="hd" fill="#000">25</text><rect x="0" y="763" width="39" height="1" fill="#C6C6C6"/><text x="19" y="786" text-anchor="middle" class="hd" fill="#000">26</text><rect x="0" y="791" width="39" height="1" fill="#C6C6C6"/><text x="19" y="814" text-anchor="middle" class="hd" fill="#000">27</text><rect x="0" y="819" width="39" height="1" fill="#C6C6C6"/><text x="19" y="842" text-anchor="middle" class="hd" fill="#000">28</text><rect x="0" y="847" width="39" height="1" fill="#C6C6C6"/><text x="19" y="870" text-anchor="middle" class="hd" fill="#000">29</text><rect x="0" y="875" width="39" height="1" fill="#C6C6C6"/><text x="19" y="898" text-anchor="middle" class="hd" fill="#000">30</text><rect x="0" y="903" width="39" height="1" fill="#C6C6C6"/><text x="19" y="926" text-anchor="middle" class="hd" fill="#000">31</text><rect x="0" y="931" width="39" height="1" fill="#C6C6C6"/><text x="19" y="954" text-anchor="middle" class="hd" fill="#000">32</text><rect x="0" y="959" width="39" height="1" fill="#C6C6C6"/><text x="19" y="982" text-anchor="middle" class="hd" fill="#000">33</text><rect x="0" y="987" width="39" height="1" fill="#C6C6C6"/><text x="19" y="1010" text-anchor="middle" class="hd" fill="#000">34</text><rect x="0" y="1015" width="39" height="1" fill="#C6C6C6"/><text x="19" y="1038" text-anchor="middle" class="hd" fill="#000">35</text><rect x="0" y="1043" width="39" height="1" fill="#C6C6C6"/><text x="19" y="1066" text-anchor="middle" class="hd" fill="#000">36</text><rect x="0" y="1071" width="39" height="1" fill="#C6C6C6"/><text x="19" y="1094" text-anchor="middle" class="hd" fill="#000">37</text><rect x="0" y="1099" width="39" height="1" fill="#C6C6C6"/><text x="19" y="1122" text-anchor="middle" class="hd" fill="#000">38</text><rect x="0" y="1127" width="39" height="1" fill="#C6C6C6"/><text x="19" y="1150" text-anchor="middle" class="hd" fill="#000">39</text><rect x="0" y="1155" width="39" height="1" fill="#C6C6C6"/><text x="19" y="1178" text-anchor="middle" class="hd" fill="#000">40</text><rect x="0" y="147" width="39" height="1" fill="#9B9B9B"/><rect x="42" y="90" width="137" height="53" fill="#FFFFFF" stroke="#137A48" stroke-width="4" rx="1"/><text x="110.5" y="126.5" text-anchor="middle" class="btn" fill="#137A48">&lt; Start</text><rect x="42" y="181" width="137" height="52" fill="#FFFFFF" stroke="#137A48" stroke-width="4" rx="1"/><text x="110.5" y="217.0" text-anchor="middle" class="btn" fill="#137A48">Next &gt;</text><rect x="2530" y="0" width="30" height="1202" fill="#E6E6E6"/><rect x="2532" y="2" width="25" height="1166" fill="#DADADA"/><rect x="2532.5" y="2.5" width="24" height="24" fill="#FFFFFF" stroke="#ABABAB"/><polygon points="2538,19 2550,19 2544,13" fill="#5F5F5F"/><rect x="2532.5" y="26.5" width="24" height="397" fill="#FFFFFF" stroke="#ABABAB"/><rect x="2532.5" y="1144.5" width="24" height="23.5" fill="#FFFFFF" stroke="#ABABAB"/><polygon points="2538,1153 2550,1153 2544,1160" fill="#5F5F5F"/><rect x="2529" y="88" width="1.2" height="1081" fill="#8A8A8A"/><rect x="0" y="1168" width="2530" height="34" fill="#E6E6E6"/><rect x="0" y="1167.5" width="2530" height="1.3" fill="#9A9A9A"/><polygon points="35,1178 35,1190 29,1184" fill="#C3C3C3"/><polygon points="64,1178 64,1191 70,1184.5" fill="#217346"/><rect x="118.5" y="1172" width="1" height="26" fill="#8F8F8F"/><text x="132.00" y="1190" class="tab" fill="#444444" textLength="40.75" lengthAdjust="spacingAndGlyphs">Start</text><rect x="188.5" y="1172" width="1" height="26" fill="#8F8F8F"/><text x="206.40" y="1190" class="tab" fill="#444444" textLength="65.54" lengthAdjust="spacingAndGlyphs">1. Initial</text><rect x="290.5" y="1172" width="1" height="26" fill="#8F8F8F"/><text x="313.70" y="1190" class="tab" fill="#444444" textLength="220.07" lengthAdjust="spacingAndGlyphs">2. Revenue &amp; Gross Profit</text><rect x="559.7" y="1172" width="1" height="26" fill="#8F8F8F"/><text x="577.60" y="1190" class="tab" fill="#444444" textLength="157.02" lengthAdjust="spacingAndGlyphs">3. SG&amp;A &amp; CAPEX</text><rect x="753.5" y="1167" width="140.20000000000005" height="32" fill="#FFFFFF" stroke="#ABABAB" stroke-width="1"/><rect x="753.5" y="1196" width="140.20000000000005" height="3" fill="#217346"/><text x="765.20" y="1190" class="tabb" fill="#217346" textLength="115.37" lengthAdjust="spacingAndGlyphs">4. Personnel</text><text x="914.30" y="1190" class="tab" fill="#444444" textLength="176.59" lengthAdjust="spacingAndGlyphs">5. Income Statement</text><rect x="1113.5" y="1172" width="1" height="26" fill="#8F8F8F"/><text x="1137.30" y="1190" class="tab" fill="#444444" textLength="267.61" lengthAdjust="spacingAndGlyphs">5.1 Income Statement monthly</text><rect x="1430.5" y="1172" width="1" height="26" fill="#8F8F8F"/><text x="1447.50" y="1190" class="tab" fill="#444444" textLength="113.72" lengthAdjust="spacingAndGlyphs">6. Cash Flows</text><rect x="1580.7" y="1172" width="1" height="26" fill="#8F8F8F"/><text x="1601.70" y="1190" class="tab" fill="#444444" textLength="203.64" lengthAdjust="spacingAndGlyphs">6.1 Cash Flows monthly</text><rect x="1827.4" y="1172" width="1" height="26" fill="#8F8F8F"/><text x="1848.00" y="1190" class="tab" fill="#444444" textLength="100.44" lengthAdjust="spacingAndGlyphs">7. Balance S</text><rect x="1958" y="1188" width="3" height="3" fill="#217346"/><rect x="1964" y="1188" width="3" height="3" fill="#217346"/><rect x="1970" y="1188" width="3" height="3" fill="#217346"/><circle cx="2000" cy="1184.5" r="10" fill="none" stroke="#6E6E6E" stroke-width="1.3"/><rect x="1994" y="1183.8" width="12" height="1.5" fill="#6E6E6E"/><rect x="1999.3" y="1178.5" width="1.5" height="12" fill="#6E6E6E"/><rect x="2033" y="1178" width="3" height="3" fill="#A6A6A6"/><rect x="2033" y="1184" width="3" height="3" fill="#A6A6A6"/><rect x="2033" y="1190" width="3" height="3" fill="#A6A6A6"/><rect x="2054" y="1173" width="475" height="23" fill="#DADADA"/><rect x="2053.5" y="1172.5" width="24" height="23.5" fill="#FFFFFF" stroke="#ABABAB"/><polygon points="2068,1178.5 2068,1190.5 2062,1184.5" fill="#5F5F5F"/><rect x="2077.5" y="1172.5" width="64" height="23.5" fill="#FFFFFF" stroke="#ABABAB"/><rect x="2504.5" y="1172.5" width="24" height="23.5" fill="#FFFFFF" stroke="#ABABAB"/><polygon points="2514,1179 2514,1191 2520,1185" fill="#5F5F5F"/></svg></body></html>
